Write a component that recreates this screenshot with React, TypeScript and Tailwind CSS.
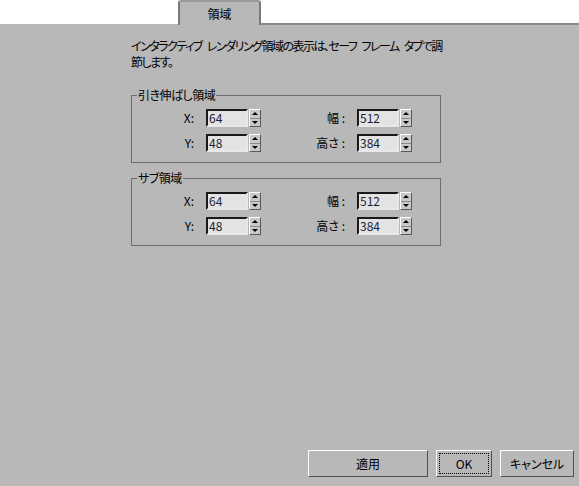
const font = "font-['Noto_Sans_CJK_JP','Noto_Sans',sans-serif] [font-feature-settings:'palt']";

function Spinner() {
  return (
    <div className="ml-px flex h-[18px] w-[12px] flex-col border border-t-white border-l-white border-b-[#5a5a5a] border-r-[#5a5a5a] bg-[#c8c8c8]">
      <div className="flex flex-1 items-center justify-center border-b border-[#8a8a8a]">
        <div className="h-0 w-0 border-x-[3px] border-b-[3px] border-x-transparent border-b-black" />
      </div>
      <div className="flex flex-1 items-center justify-center">
        <div className="h-0 w-0 border-x-[3px] border-t-[3px] border-x-transparent border-t-black" />
      </div>
    </div>
  );
}

function NumField({ label, value, labelW }: { label: string; value: string; labelW: string }) {
  return (
    <div className="flex items-center">
      <div className={`${labelW} flex justify-end pr-[12px]`}>
        <span className="shrink-0 whitespace-nowrap text-[12px] text-black">{label}</span>
      </div>
      <div className="flex h-[18px] w-[42px] items-center border-2 border-t-[#1a1a1a] border-l-[#1a1a1a] border-b-[#e8e8e8] border-r-[#e8e8e8] bg-[#e3e3e3] pl-[1px] text-[12px] leading-none text-[#1c1c38]">
        {value}
      </div>
      <Spinner />
    </div>
  );
}

function Group({ title }: { title: string }) {
  return (
    <div className="relative h-[68px] border border-[#6d6d6d]">
      <span className="absolute -top-[9px] left-[5px] whitespace-nowrap bg-[#b8b8b8] px-[1px] text-[12px] leading-[16px] tracking-[-0.5px] text-black">
        {title}
      </span>
      <div className="flex flex-col gap-[7px] pt-[13px]">
        <div className="flex">
          <div className="w-[195px]"><NumField label="X:" value="64" labelW="w-[74px]" /></div>
          <NumField label="幅 :" value="512" labelW="w-[30px]" />
        </div>
        <div className="flex">
          <div className="w-[195px]"><NumField label="Y:" value="48" labelW="w-[74px]" /></div>
          <NumField label="高さ :" value="384" labelW="w-[30px]" />
        </div>
      </div>
    </div>
  );
}

function Btn({ children, w, focus }: { children: React.ReactNode; w: string; focus?: boolean }) {
  return (
    <div className={`${w} flex h-[27px] items-center justify-center border border-t-white border-l-white border-b-[#505050] border-r-[#505050] bg-[#b8b8b8] p-[2px]`}>
      <div className={`flex h-full w-full items-center justify-center text-[12px] text-black ${focus ? "border border-dotted border-black" : ""}`}>
        {children}
      </div>
    </div>
  );
}

export default function App() {
  return (
    <div className={`flex h-[486px] w-[579px] flex-col overflow-hidden bg-[#b8b8b8] ${font}`}>
      <div className="flex h-[25px] items-end bg-white">
        <div className="h-[24px] w-[178px] border-b border-[#b8b8b8]" />
        <div className="flex h-[25px] w-[83px] items-center justify-center rounded-t-[3px] border-x-2 border-t-2 border-x-[#7a7a7a] border-t-[#9a9a9a] bg-[#b8b8b8] text-[12px] text-black">
          領域
        </div>
        <div className="h-[2px] flex-1 bg-[#8a8a8a]" />
      </div>
      <div className="ml-[131px] mt-[13px] w-[310px]">
        <p className="whitespace-nowrap text-[12px] leading-[16px] tracking-[-1.5px] text-black">
          インタラクティブ<span className="ml-[5px]" />レンダリング領域の表示は、セーフ<span className="ml-[5px]" />フレーム<span className="ml-[5px]" />タブで調
          <br />
          節します。
        </p>
        <div className="mt-[25px]">
          <Group title="引き伸ばし領域" />
        </div>
        <div className="mt-[15px]">
          <Group title="サブ領域" />
        </div>
      </div>
      <div className="mt-auto mb-[9px] mr-[5px] flex justify-end gap-[8px]">
        <Btn w="w-[120px]">適用</Btn>
        <Btn w="w-[56px]" focus>OK</Btn>
        <Btn w="w-[74px]">キャンセル</Btn>
      </div>
    </div>
  );
}
